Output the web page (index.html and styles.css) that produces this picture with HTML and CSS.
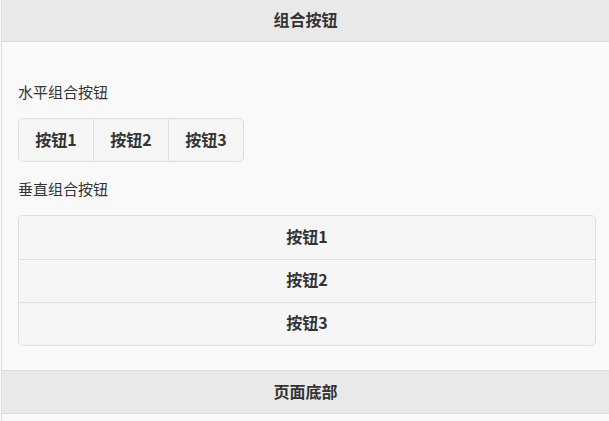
FILE: index.html
```html
<!DOCTYPE html>
<html lang="zh-CN">
<head>
<meta charset="utf-8">
<title>组合按钮</title>
<link rel="stylesheet" href="styles.css">
</head>
<body>
<div class="page">
  <header class="bar header"><h1>组合按钮</h1></header>
  <main class="content">
    <p class="label label-first">水平组合按钮</p>
    <div class="group group-h">
      <a class="btn">按钮1</a>
      <a class="btn">按钮2</a>
      <a class="btn">按钮3</a>
    </div>
    <p class="label label-second">垂直组合按钮</p>
    <div class="group group-v">
      <a class="btn">按钮1</a>
      <a class="btn">按钮2</a>
      <a class="btn">按钮3</a>
    </div>
  </main>
  <footer class="bar footer"><h2>页面底部</h2></footer>
</div>
</body>
</html>
```
FILE: styles.css
```css
* { box-sizing: border-box; }
html, body {
  margin: 0;
  padding: 0;
  background: #f9f9f9;
  font-family: "Noto Sans CJK SC", "Noto Sans", "Liberation Sans", sans-serif;
  color: #333;
}
.page {
  margin-left: 1px;
  border-left: 1px solid #dddddd;
  min-height: 421px;
  display: flex;
  flex-direction: column;
}
.bar {
  background: #e9e9e9;
  display: flex;
  align-items: center;
  justify-content: center;
  height: 43px;
  border-bottom: 1px solid #dddddd;
}
.bar h1, .bar h2 {
  margin: 0;
  font-size: 16px;
  font-weight: 700;
  line-height: 20px;
  color: #333;
}
.header { height: 42px; padding-bottom: 3px; }
.footer {
  border-top: 1px solid #dddddd;
  height: 44px;
  padding-bottom: 2px;
}
.content {
  padding: 40px 13px 24px 16px;
  display: flex;
  flex-direction: column;
}
.label {
  margin: 0;
  font-size: 15px;
  line-height: 20px;
  height: 20px;
}
.label-first { margin-bottom: 16px; }
.label-second { margin: 17px 0 16px; }
.group {
  display: flex;
  border: 1px solid #dddddd;
  border-radius: 5px;
  background: #f6f6f6;
  overflow: hidden;
}
.group-h { align-self: flex-start; width: 226px; }
.btn {
  display: flex;
  align-items: center;
  justify-content: center;
  font-size: 16px;
  font-weight: 700;
  color: #333;
  text-decoration: none;
  background: #f6f6f6;
}
.group-h .btn {
  flex: 1 1 0;
  height: 42px;
  padding-bottom: 2px;
}
.group-h .btn + .btn { border-left: 1px solid #dddddd; }
.group-v { flex-direction: column; }
.group-v .btn { height: 43px; padding-bottom: 4px; }
.group-v .btn + .btn { border-top: 1px solid #dddddd; }
```
